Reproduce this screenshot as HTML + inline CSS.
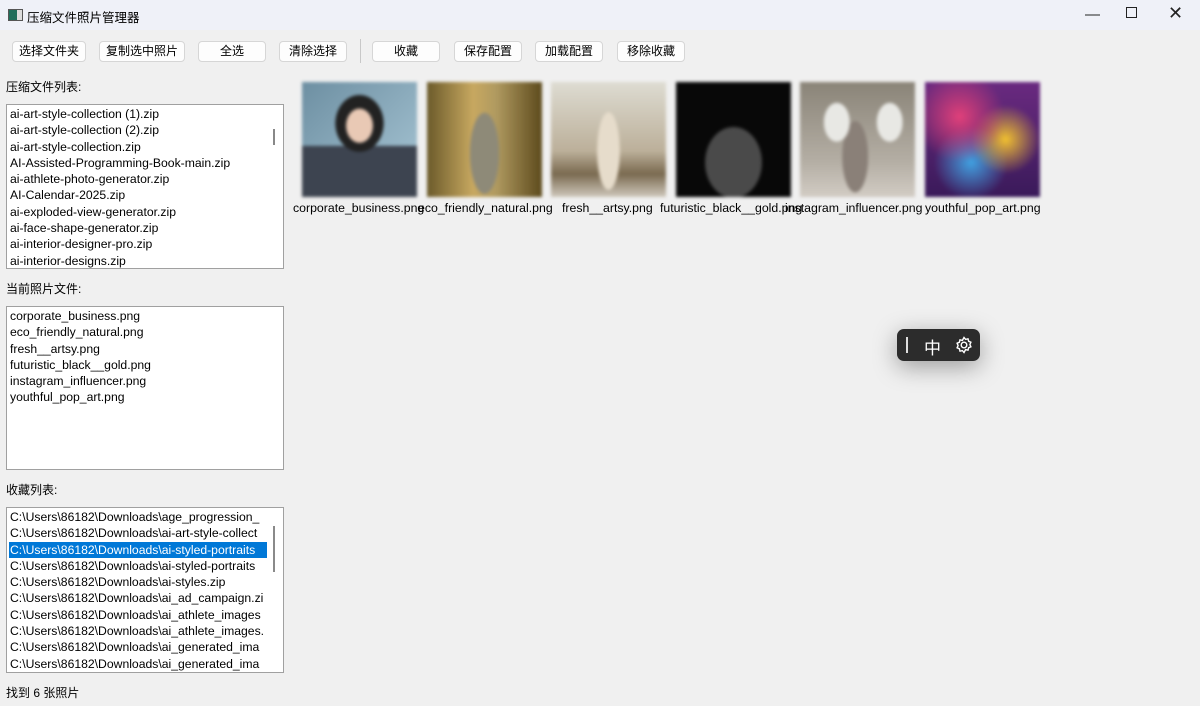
<!DOCTYPE html>
<html><head><meta charset="utf-8"><style>
*{box-sizing:border-box;margin:0;padding:0}
body{width:1200px;height:706px;background:#f0f0f0;font-family:"Liberation Sans","Noto Sans CJK SC",sans-serif;font-size:12.5px;color:#000;position:relative;overflow:hidden}
.title{position:absolute;left:0;top:0;width:1200px;height:30px;background:#eff1f8}
.title .t{position:absolute;left:27px;top:7px;font-size:12.5px}
.ico{position:absolute;left:8px;top:9px;width:15px;height:12px;background:linear-gradient(90deg,#1f6e5a 0 60%,#ddd 60%);border:1px solid #555}
.wc{position:absolute;top:6px;font-size:15px;color:#222}
.btn{position:absolute;top:41px;height:21px;background:#fdfdfd;border:1px solid #d6d6d6;border-radius:4px;text-align:center;line-height:19px;font-size:12px}
.sep{position:absolute;left:360px;top:39px;width:1px;height:24px;background:#c8c8c8}
.lbl{position:absolute;left:6px;font-size:12px}
.box{position:absolute;left:6px;width:278px;background:#fff;border:1px solid #a0a0a0;overflow:hidden;padding:1px 0 0 3px}
.box div{height:16.3px;line-height:16.3px;white-space:nowrap;font-size:12.2px}
.sb{position:absolute;right:8px;width:2px;background:#888}
.sel{background:#0078d7;color:#fff;margin-left:-1px;padding-left:1px;width:258px}
.th{position:absolute;top:82px;width:115px;height:115px;filter:blur(1.5px)}
.cap{position:absolute;top:201px;font-size:12.3px;white-space:nowrap}
.ime{position:absolute;left:897px;top:329px;width:83px;height:32px;background:#2c2c2c;border-radius:7px;box-shadow:0 6px 24px rgba(0,0,0,.35);color:#fff}
</style></head><body>
<div class="title"><div class="ico"></div><div class="t">压缩文件照片管理器</div>
<div class="wc" style="left:1085px">—</div><div class="wc" style="left:1126px;top:7px;width:11px;height:11px;border:1.3px solid #222"></div><div class="wc" style="left:1168px;top:3px;font-size:18px">✕</div></div>
<div class="btn" style="left:12px;width:74px">选择文件夹</div>
<div class="btn" style="left:99px;width:86px">复制选中照片</div>
<div class="btn" style="left:198px;width:68px">全选</div>
<div class="btn" style="left:279px;width:68px">清除选择</div>
<div class="sep"></div>
<div class="btn" style="left:372px;width:68px">收藏</div>
<div class="btn" style="left:454px;width:68px">保存配置</div>
<div class="btn" style="left:535px;width:68px">加载配置</div>
<div class="btn" style="left:617px;width:68px">移除收藏</div>

<div class="lbl" style="top:78px">压缩文件列表:</div>
<div class="box" style="top:104px;height:165px">
<div>ai-art-style-collection (1).zip</div><div>ai-art-style-collection (2).zip</div><div>ai-art-style-collection.zip</div><div>AI-Assisted-Programming-Book-main.zip</div><div>ai-athlete-photo-generator.zip</div><div>AI-Calendar-2025.zip</div><div>ai-exploded-view-generator.zip</div><div>ai-face-shape-generator.zip</div><div>ai-interior-designer-pro.zip</div><div>ai-interior-designs.zip</div>
<span class="sb" style="top:24px;height:16px"></span></div>

<div class="lbl" style="top:280px">当前照片文件:</div>
<div class="box" style="top:306px;height:164px">
<div>corporate_business.png</div><div>eco_friendly_natural.png</div><div>fresh__artsy.png</div><div>futuristic_black__gold.png</div><div>instagram_influencer.png</div><div>youthful_pop_art.png</div></div>

<div class="lbl" style="top:481px">收藏列表:</div>
<div class="box" style="top:507px;height:166px">
<div>C:\Users\86182\Downloads\age_progression_</div><div>C:\Users\86182\Downloads\ai-art-style-collect</div><div class="sel">C:\Users\86182\Downloads\ai-styled-portraits</div><div>C:\Users\86182\Downloads\ai-styled-portraits</div><div>C:\Users\86182\Downloads\ai-styles.zip</div><div>C:\Users\86182\Downloads\ai_ad_campaign.zi</div><div>C:\Users\86182\Downloads\ai_athlete_images</div><div>C:\Users\86182\Downloads\ai_athlete_images.</div><div>C:\Users\86182\Downloads\ai_generated_ima</div><div>C:\Users\86182\Downloads\ai_generated_ima</div>
<span class="sb" style="top:18px;height:46px;background:#8a8a8a"></span></div>
<div class="lbl" style="top:684px">找到 6 张照片</div>

<div class="th" style="left:302px;background:radial-gradient(ellipse 22px 28px at 50% 38%,#e9c9b5 60%,transparent 62%),radial-gradient(ellipse 34px 40px at 50% 36%,#222 70%,transparent 72%),linear-gradient(180deg,transparent 55%,#3d4450 56%),linear-gradient(135deg,#6d8fa2,#a9c7d6)"></div>
<div class="th" style="left:427px;background:radial-gradient(ellipse 18px 50px at 50% 62%,#8e8a78 80%,transparent 82%),linear-gradient(90deg,#6b5a2a,#c8a860 40%,#b09a60 60%,#5d4a1c)"></div>
<div class="th" style="left:551px;background:radial-gradient(ellipse 14px 48px at 50% 60%,#e6dccb 80%,transparent 82%),linear-gradient(180deg,#dedcd2,#bcb09a 60%,#7a6a50 80%,#cfc8bc)"></div>
<div class="th" style="left:676px;background:radial-gradient(ellipse 40px 50px at 50% 70%,#4a4a4a 70%,transparent 72%),#080808"></div>
<div class="th" style="left:800px;background:radial-gradient(ellipse 16px 24px at 32% 35%,#e8e8e4 80%,transparent 82%),radial-gradient(ellipse 16px 24px at 78% 35%,#e8e8e4 80%,transparent 82%),radial-gradient(ellipse 16px 44px at 48% 65%,#8a8078 80%,transparent 82%),linear-gradient(180deg,#8a8478,#b5afa5 70%,#d2ccc4)"></div>
<div class="th" style="left:925px;background:radial-gradient(circle at 30% 30%,#e0407a,transparent 40%),radial-gradient(circle at 70% 50%,#f0c030,transparent 35%),radial-gradient(circle at 40% 70%,#40a0e0,transparent 35%),linear-gradient(180deg,#6a2a80,#3a1a5a)"></div>
<div class="cap" style="left:293px">corporate_business.png</div>
<div class="cap" style="left:418px">eco_friendly_natural.png</div>
<div class="cap" style="left:562px">fresh__artsy.png</div>
<div class="cap" style="left:660px">futuristic_black__gold.png</div>
<div class="cap" style="left:785px">instagram_influencer.png</div>
<div class="cap" style="left:925px">youthful_pop_art.png</div>

<div class="ime"><span style="position:absolute;left:9px;top:8px;width:2px;height:16px;background:#ddd"></span><span style="position:absolute;left:27px;top:5px;font-size:17px">中</span>
<svg style="position:absolute;left:57px;top:6px" width="20" height="20" viewBox="0 0 20 20" fill="none" stroke="#fff" stroke-width="1.4"><circle cx="10" cy="10" r="2.8"/><path d="M10 2.5l1.6 1.9 2.4-.6.6 2.4 2.3 1-1 2.3 1 2.3-2.3 1-.6 2.4-2.4-.6L10 17.5l-1.6-1.9-2.4.6-.6-2.4-2.3-1 1-2.3-1-2.3 2.3-1 .6-2.4 2.4.6z"/></svg></div>
</body></html>
